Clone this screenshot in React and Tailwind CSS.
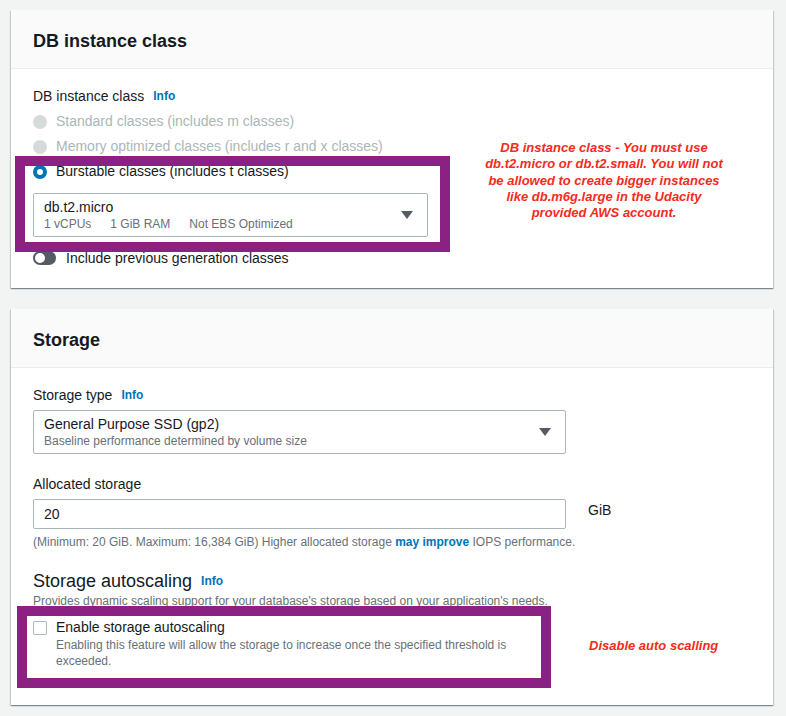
import React from 'react';

const font = { fontFamily: '"Liberation Sans", Arial, sans-serif' };

function Info() {
  return <span className="ml-[9px] text-[12px] font-bold text-[#0073bb]">Info</span>;
}

function Caret() {
  return (
    <svg width="12" height="8" viewBox="0 0 12 8" className="shrink-0">
      <path d="M0 0 H12 L6 8 Z" fill="#545b64" />
    </svg>
  );
}

function Radio({ checked, disabled, label }) {
  return (
    <div className="flex h-[25px] items-center">
      {checked ? (
        <span className="box-border h-[14px] w-[14px] rounded-full border-[4px] border-[#0073bb] bg-white" />
      ) : (
        <span className="h-[14px] w-[14px] rounded-full bg-[#d5dbdb]" />
      )}
      <span className={`ml-[9px] text-[14px] ${disabled ? 'text-[#aab7b8]' : 'text-[#16191f]'}`}>{label}</span>
    </div>
  );
}

function Panel({ title, children, className }) {
  return (
    <div className={`bg-white shadow-[0_1px_1px_0_rgba(0,28,36,0.3),1px_1px_1px_0_rgba(0,28,36,0.15),-1px_1px_1px_0_rgba(0,28,36,0.15)] ${className || ''}`}>
      <div className="flex h-[59px] items-center border-b border-[#eaeded] bg-[#fafafa] px-[22px] pt-[4px]">
        <h2 className="text-[18px] font-bold text-[#16191f]">{title}</h2>
      </div>
      {children}
    </div>
  );
}

export default function App() {
  return (
    <div className="relative min-h-[716px] bg-[#f2f3f3] pl-[11px] pr-[13px] pt-[10px] text-[#16191f]" style={font}>
      <Panel title="DB instance class">
        <div className="px-[22px] pb-[20px] pt-[17px]">
          <div className="flex h-[20px] items-center text-[14px]">
            DB instance class <Info />
          </div>
          <div className="mt-[3px]">
            <Radio disabled label="Standard classes (includes m classes)" />
            <Radio disabled label="Memory optimized classes (includes r and x classes)" />
            <Radio checked label="Burstable classes (includes t classes)" />
          </div>
          <div className="mt-[9px] flex h-[44px] w-[395px] items-center justify-between rounded-[2px] border border-[#aab7b8] pl-[10px] pr-[14px]">
            <div>
              <div className="text-[14px] leading-[18px]">db.t2.micro</div>
              <div className="flex gap-[19px] text-[12px] leading-[16px] text-[#687078]">
                <span>1 vCPUs</span>
                <span>1 GiB RAM</span>
                <span>Not EBS Optimized</span>
              </div>
            </div>
            <Caret />
          </div>
          <div className="mt-[11px] flex h-[20px] items-center">
            <span className="flex h-[14px] w-[23px] items-center rounded-full bg-[#545b64] pl-[2px]">
              <span className="h-[10px] w-[10px] rounded-full bg-white" />
            </span>
            <span className="ml-[10px] text-[14px]">Include previous generation classes</span>
          </div>
        </div>
      </Panel>

      <Panel title="Storage" className="mt-[21px]">
        <div className="px-[22px] pb-[36px] pt-[17px]">
          <div className="flex h-[20px] items-center text-[14px]">
            Storage type <Info />
          </div>
          <div className="mt-[5px] flex h-[44px] w-[533px] items-center justify-between rounded-[2px] border border-[#aab7b8] pl-[10px] pr-[14px]">
            <div>
              <div className="text-[14px] leading-[18px]">General Purpose SSD (gp2)</div>
              <div className="text-[12px] leading-[16px] text-[#687078]">Baseline performance determined by volume size</div>
            </div>
            <Caret />
          </div>
          <div className="mt-[20px] flex h-[20px] items-center text-[14px]">Allocated storage</div>
          <div className="mt-[5px] flex items-start">
            <div className="flex h-[30px] w-[533px] items-center rounded-[2px] border border-[#aab7b8] px-[10px] text-[14px]">20</div>
            <span className="ml-[22px] mt-[1px] text-[14px]">GiB</span>
          </div>
          <div className="mt-[5px] text-[12px] leading-[16px] text-[#687078]">
            (Minimum: 20 GiB. Maximum: 16,384 GiB) Higher allocated storage{' '}
            <span className="font-bold text-[#0073bb]">may improve</span> IOPS performance.
          </div>
          <div className="mt-[19px] flex h-[24px] items-center text-[18px]">
            Storage autoscaling <Info />
          </div>
          <div className="text-[12px] leading-[16px] text-[#687078]">
            Provides dynamic scaling support for your database's storage based on your application's needs.
          </div>
          <div className="mt-[8px] flex items-start">
            <span className="mt-[4px] h-[14px] w-[14px] shrink-0 rounded-[2px] border border-[#aab7b8] bg-white" />
            <div className="ml-[9px]">
              <div className="flex h-[20px] items-center text-[14px]">Enable storage autoscaling</div>
              <div className="w-[480px] text-[12px] leading-[16px] text-[#687078]">
                Enabling this feature will allow the storage to increase once the specified threshold is exceeded.
              </div>
            </div>
          </div>
        </div>
      </Panel>

      {/* annotations */}
      <div className="pointer-events-none absolute left-[15px] top-[156px] h-[96px] w-[435px] border-[10px] border-[#8b2283]" />
      <div className="pointer-events-none absolute left-[17px] top-[606px] h-[82px] w-[534px] border-[10px] border-[#8b2283]" />
      <div className="absolute left-[484px] top-[140px] w-[240px] text-center text-[13px] font-bold italic leading-[16.3px] text-[#f52b1c]">
        DB instance class - You must use db.t2.micro or db.t2.small. You will not be allowed to create bigger instances like db.m6g.large in the Udacity provided AWS account.
      </div>
      <div className="absolute left-[589px] top-[637px] text-[13px] font-bold italic leading-[18px] text-[#f52b1c]">
        Disable auto scalling
      </div>
    </div>
  );
}
